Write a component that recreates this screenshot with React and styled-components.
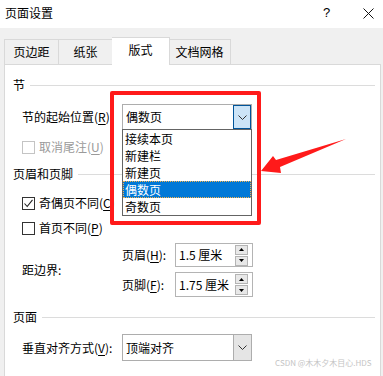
import React from 'react'
import styled, { createGlobalStyle } from 'styled-components'

const GlobalStyle = createGlobalStyle`
    html, body {
        margin: 0;
        padding: 0;
        background: #ffffff;
    }
    body {
        font-family: "Noto Sans CJK SC", "Noto Sans", sans-serif;
        font-size: 12px;
        color: #000000;
    }
    * { box-sizing: border-box; }
`

const tabs = ['页边距', '纸张', '版式', '文档网格']
const tabWidths = [55, 54, 58, 62]
const sectionStarts = ['接续本页', '新建栏', '新建页', '偶数页', '奇数页']

function Chevron() {
    return (
        <svg width="9" height="5" viewBox="0 0 9 5">
            <path d="M0.5 0.5 L4.5 4.5 L8.5 0.5" fill="none" stroke="#333" strokeWidth="1" />
        </svg>
    )
}

function CheckMark() {
    return (
        <svg width="11" height="11" viewBox="0 0 11 11">
            <path d="M1.5 5.5 L4.2 8.5 L9.5 1.8" fill="none" stroke="#222" strokeWidth="1.1" />
        </svg>
    )
}

function Spinner() {
    return (
        <SpinButtons>
            <SpinBtn>
                <svg width="5" height="3" viewBox="0 0 5 3"><path d="M0 3 L2.5 0 L5 3 Z" fill="#000" /></svg>
            </SpinBtn>
            <SpinBtn>
                <svg width="5" height="3" viewBox="0 0 5 3"><path d="M0 0 L5 0 L2.5 3 Z" fill="#000" /></svg>
            </SpinBtn>
        </SpinButtons>
    )
}

function Check({ label, accel, checked, disabled, top }) {
    return (
        <CheckRow $top={top} $disabled={disabled}>
            <Box $disabled={disabled}>{checked && <CheckMark />}</Box>
            <span>{label}(<Accel>{accel}</Accel>)</span>
        </CheckRow>
    )
}

export default function App() {
    return (
        <Dialog>
            <GlobalStyle />
            <TitleBar>
                <Title>页面设置</Title>
                <Help>?</Help>
                <Close>
                    <svg width="11" height="11" viewBox="0 0 11 11">
                        <path d="M0.5 0.5 L10.5 10.5 M10.5 0.5 L0.5 10.5" stroke="#111" strokeWidth="1" />
                    </svg>
                </Close>
            </TitleBar>

            <Body>
                <TabStrip>
                    {tabs.map((t, i) => (
                        <Tab key={t} $active={i === 2} $w={tabWidths[i]}>{t}</Tab>
                    ))}
                </TabStrip>

                <Panel>
                    <SectionHeader $top={10}>
                        <span>节</span>
                        <Rule />
                    </SectionHeader>
                    <Row $top={9} $h={26}>
                        <Label>节的起始位置(<Accel>R</Accel>):</Label>
                        <Combo $h={26}>
                            <ComboText>偶数页</ComboText>
                            <ComboButton $open>
                                <Chevron />
                            </ComboButton>
                            <DropList>
                                {sectionStarts.map(s => (
                                    <DropItem key={s} $selected={s === '偶数页'}>{s}</DropItem>
                                ))}
                            </DropList>
                        </Combo>
                    </Row>
                    <Check label="取消尾注" accel="U" disabled top={7} />

                    <SectionHeader $top={7}>
                        <span>页眉和页脚</span>
                        <Rule />
                    </SectionHeader>
                    <Check label="奇偶页不同" accel="C" checked top={9} />
                    <Check label="首页不同" accel="P" top={5} />

                    <MarginGrid>
                        <EdgeLabel>距边界:</EdgeLabel>
                        <Label as="div">页眉(<Accel>H</Accel>):</Label>
                        <SpinInput>
                            <span>1.5 厘米</span>
                            <Spinner />
                        </SpinInput>
                        <Label as="div">页脚(<Accel>F</Accel>):</Label>
                        <SpinInput>
                            <span>1.75 厘米</span>
                            <Spinner />
                        </SpinInput>
                    </MarginGrid>

                    <SectionHeader $top={10}>
                        <span>页面</span>
                        <Rule />
                    </SectionHeader>
                    <Row $top={7} $h={27}>
                        <Label>垂直对齐方式(<Accel>V</Accel>):</Label>
                        <Combo $h={27}>
                            <ComboText>顶端对齐</ComboText>
                            <ComboButton>
                                <Chevron />
                            </ComboButton>
                        </Combo>
                    </Row>
                </Panel>
            </Body>

            <RedFrame />
            <Arrow viewBox="0 0 95 45" width="95" height="45">
                <polygon points="6,38 18,23 21,27 91,6 25,34 26,40" fill="#ff1a1a" />
            </Arrow>
            <Watermark>CSDN @木木夕木目心.HDS</Watermark>
        </Dialog>
    )
}

const Dialog = styled.div`
    position: relative;
    width: 383px;
    height: 376px;
    overflow: hidden;
    background: #ffffff;
    display: flex;
    flex-direction: column;
`

const TitleBar = styled.div`
    height: 28px;
    display: flex;
    align-items: center;
    padding: 0 0 2px 5px;
    background: #ffffff;
`

const Title = styled.div`
    flex: 1;
    font-size: 12px;
    line-height: 16px;
`

const Help = styled.div`
    width: 12px;
    margin-right: 28px;
    font-family: "Liberation Sans", sans-serif;
    font-size: 13px;
    line-height: 16px;
`

const Close = styled.div`
    width: 11px;
    height: 11px;
    margin-right: 9px;
    display: flex;
`

const Body = styled.div`
    flex: 1;
    display: flex;
    flex-direction: column;
    background: #f0f0f0;
    padding: 0 2px 0 4px;
`

const TabStrip = styled.div`
    height: 36px;
    display: flex;
    align-items: flex-end;
`

const Tab = styled.div`
    position: relative;
    width: ${p => p.$w}px;
    height: ${p => (p.$active ? 28 : 25)}px;
    margin-left: ${p => (p.$active ? -1 : 0)}px;
    margin-right: ${p => (p.$active ? -1 : 0)}px;
    margin-bottom: ${p => (p.$active ? -1 : 0)}px;
    padding-bottom: ${p => (p.$active ? 3 : 0)}px;
    z-index: ${p => (p.$active ? 2 : 1)};
    background: ${p => (p.$active ? '#ffffff' : '#f0f0f0')};
    border: 1px solid #d9d9d9;
    border-bottom: none;
    display: flex;
    align-items: center;
    justify-content: center;
    line-height: 16px;
    & + & { border-left: ${p => (p.$active ? '1px solid #d9d9d9' : 'none')}; }
`

const Panel = styled.div`
    flex: 1;
    background: #ffffff;
    border: 1px solid #d9d9d9;
    border-bottom: none;
    padding: 0 5px 0 8px;
    display: flex;
    flex-direction: column;
`

const SectionHeader = styled.div`
    height: 20px;
    margin-top: ${p => p.$top}px;
    display: flex;
    align-items: center;
    line-height: 16px;
`

const Rule = styled.div`
    flex: 1;
    height: 1px;
    margin-left: 5px;
    background: #dcdcdc;
`

const Row = styled.div`
    height: ${p => p.$h}px;
    margin-top: ${p => p.$top}px;
    margin-left: 9px;
    display: flex;
    align-items: center;
`

const Label = styled.label`
    width: 100px;
    line-height: 16px;
    white-space: nowrap;
`

const Accel = styled.span`
    text-decoration: underline;
    text-underline-offset: 2px;
`

const Combo = styled.div`
    position: relative;
    width: 130px;
    height: ${p => p.$h}px;
    border: 1px solid #adadad;
    display: flex;
    align-items: stretch;
    background: #ffffff;
`

const ComboText = styled.div`
    flex: 1;
    display: flex;
    align-items: center;
    padding-left: 3px;
    line-height: 16px;
`

const ComboButton = styled.div`
    width: 18px;
    display: flex;
    align-items: center;
    justify-content: center;
    background: ${p => (p.$open ? '#cce4f7' : '#e5e5e5')};
    border-left: 1px solid ${p => (p.$open ? '#005499' : '#adadad')};
    outline: ${p => (p.$open ? '1px solid #005499' : 'none')};
    outline-offset: -1px;
`

const DropList = styled.div`
    position: absolute;
    top: 100%;
    left: -1px;
    width: 130px;
    border: 1px solid #646464;
    background: #ffffff;
    z-index: 5;
`

const DropItem = styled.div`
    height: 17px;
    line-height: 17px;
    padding-left: 2px;
    color: ${p => (p.$selected ? '#ffffff' : '#000000')};
    background: ${p => (p.$selected ? '#0078d7' : 'transparent')};
    outline: ${p => (p.$selected ? '1px dotted #f7b24a' : 'none')};
    outline-offset: -1px;
`

const CheckRow = styled.div`
    height: 20px;
    margin-top: ${p => p.$top}px;
    margin-left: 9px;
    display: flex;
    align-items: center;
    gap: 4px;
    line-height: 16px;
    white-space: nowrap;
    color: ${p => (p.$disabled ? '#9a9a9a' : '#000000')};
`

const Box = styled.div`
    width: 13px;
    height: 13px;
    border: 1px solid ${p => (p.$disabled ? '#c4c4c4' : '#333333')};
    background: #ffffff;
    display: flex;
    align-items: center;
    justify-content: center;
`

const MarginGrid = styled.div`
    margin-top: 5px;
    margin-left: 9px;
    display: grid;
    grid-template-columns: 100px 53px 78px;
    grid-template-rows: 24px 25px;
    row-gap: 5px;
    align-items: center;
`

const EdgeLabel = styled.div`
    grid-row: 1 / 3;
    line-height: 16px;
`

const SpinInput = styled.div`
    height: 100%;
    border: 1px solid #b4b4b4;
    display: flex;
    align-items: center;
    padding: 0 4px 0 3px;
    line-height: 16px;
    span { flex: 1; white-space: nowrap; }
`

const SpinButtons = styled.div`
    width: 13px;
    display: flex;
    flex-direction: column;
    gap: 1px;
`

const SpinBtn = styled.div`
    height: 10px;
    border: 1px solid #b4b4b4;
    background: #e8e8e8;
    display: flex;
    align-items: center;
    justify-content: center;
`

const RedFrame = styled.div`
    position: absolute;
    left: 110px;
    top: 91px;
    width: 151px;
    height: 134px;
    border: 4px solid #ff1a1a;
    border-radius: 2px;
    z-index: 10;
`

const Arrow = styled.svg`
    position: absolute;
    left: 255px;
    top: 133px;
    z-index: 10;
`

const Watermark = styled.div`
    position: absolute;
    left: 275px;
    top: 357px;
    font-size: 8px;
    line-height: 11px;
    color: #c4c4c4;
    white-space: nowrap;
`
